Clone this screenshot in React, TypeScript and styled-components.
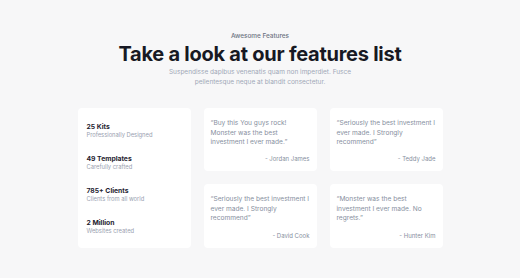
import React from "react";
import styled, { createGlobalStyle } from "styled-components";

const Global = createGlobalStyle`
  html, body { margin: 0; padding: 0; background: #f7f7f8; }
  body { font-family: Inter, "Noto Sans", sans-serif; -webkit-font-smoothing: antialiased; }
`;

const Page = styled.div`
  width: 520px;
  height: 278px;
  box-sizing: border-box;
  padding-top: 30px;
  display: flex;
  flex-direction: column;
  align-items: center;
`;

const Eyebrow = styled.div`
  font-size: 6.4px;
  font-weight: 500;
  color: #6b7280;
  line-height: 10px;
  margin-top: 1px;
`;

const Title = styled.h1`
  margin: 0;
  font-size: 20px;
  font-weight: 700;
  letter-spacing: -0.25px;
  color: #171923;
  line-height: 26px;
`;

const Subtitle = styled.p`
  margin: 0;
  width: 200px;
  text-align: center;
  font-size: 6.5px;
  line-height: 10px;
  color: #a0a7b7;
`;

const Grid = styled.div`
  margin-top: 21px;
  width: 365px;
  display: grid;
  grid-template-columns: repeat(3, 1fr);
  grid-template-rows: 63px 64px;
  gap: 13px;
`;

const Card = styled.div`
  background: #ffffff;
  border-radius: 4px;
  box-sizing: border-box;
`;

const StatsCard = styled(Card)`
  grid-row: 1 / span 2;
  padding: 14px 9px;
  display: flex;
  flex-direction: column;
  gap: 15px;
`;

const Stat = styled.div`
  display: flex;
  flex-direction: column;
`;

const StatValue = styled.div`
  font-size: 6.8px;
  font-weight: 700;
  color: #1f2330;
  line-height: 9px;
`;

const StatLabel = styled.div`
  font-size: 5.8px;
  color: #9aa1b0;
  line-height: 8px;
`;

const Quote = styled(Card)`
  padding: 11px 7px 8px;
  display: flex;
  flex-direction: column;
  justify-content: space-between;
`;

const QuoteText = styled.p`
  margin: 0;
  font-size: 6.6px;
  line-height: 9.7px;
  color: #878fa0;
`;

const Author = styled.div`
  text-align: right;
  font-size: 6px;
  line-height: 9px;
  color: #878fa0;
`;

const stats = [
  ["25 Kits", "Professionally Designed"],
  ["49 Templates", "Carefully crafted"],
  ["785+ Clients", "Clients from all world"],
  ["2 Million", "Websites created"],
];

const quotes = [
  ["\u201cBuy this You guys rock! Monster was the best investment I ever made.\u201d", "- Jordan James"],
  ["\u201cSeriously the best investment I ever made. I Strongly recommend\u201d", "- Teddy Jade"],
  ["\u201cSeriously the best investment I ever made. I Strongly recommend\u201d", "- David Cook"],
  ["\u201cMonster was the best investment I ever made. No regrets.\u201d", "- Hunter Kim"],
];

export default function App() {
  return (
    <>
      <Global />
      <Page>
        <Eyebrow>Awesome Features</Eyebrow>
        <Title>Take a look at our features list</Title>
        <Subtitle>
          Suspendisse dapibus venenatis quam non imperdiet. Fusce pellentesque neque at blandit consectetur.
        </Subtitle>
        <Grid>
          <StatsCard>
            {stats.map(([v, l]) => (
              <Stat key={v}>
                <StatValue>{v}</StatValue>
                <StatLabel>{l}</StatLabel>
              </Stat>
            ))}
          </StatsCard>
          {quotes.map(([q, a]) => (
            <Quote key={a}>
              <QuoteText>{q}</QuoteText>
              <Author>{a}</Author>
            </Quote>
          ))}
        </Grid>
      </Page>
    </>
  );
}
